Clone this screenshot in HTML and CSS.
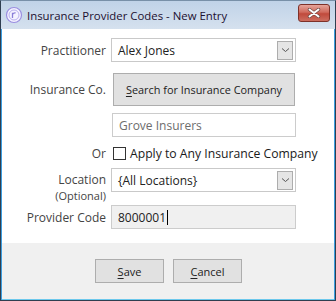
FILE: index.html
```html
<!DOCTYPE html>
<html lang="en">
<head>
  <meta charset="UTF-8">
  <title>Insurance Provider Codes - New Entry</title>
  <link rel="stylesheet" href="styles.css">
</head>
<body>
  <div class="window">
    <div class="titlebar">
      <svg class="app-icon" width="18" height="18" viewBox="0 0 18 18">
        <circle cx="9" cy="9" r="7.5" fill="#f4f2ff" stroke="#9a8ee0" stroke-width="1.2"/>
        <circle cx="9" cy="9" r="5" fill="none" stroke="#b9b0ee" stroke-width="1"/>
        <path d="M7.5 12 V6.8 M7.5 8.4 Q8.4 6.6 10.6 6.9" fill="none" stroke="#8a7ed8" stroke-width="1.3"/>
      </svg>
      <span class="title">Insurance Provider Codes - New Entry</span>
      <div class="close-btn">
        <svg width="14" height="10" viewBox="0 0 14 10">
          <path d="M2.5 1.5 L11.5 8.5 M11.5 1.5 L2.5 8.5" stroke="#6b4a46" stroke-width="3.4" stroke-linecap="round"/>
          <path d="M2.5 1.5 L11.5 8.5 M11.5 1.5 L2.5 8.5" stroke="#ffffff" stroke-width="2" stroke-linecap="round"/>
        </svg>
      </div>
    </div>

    <div class="content">
      <div class="row row-practitioner">
        <label class="label">Practitioner</label>
        <div class="select">
          <span class="value">Alex Jones</span>
          <span class="drop">
            <svg width="9" height="6" viewBox="0 0 9 6"><path d="M1 1.5 L4.5 4.5 L8 1.5" fill="none" stroke="#555" stroke-width="1"/></svg>
          </span>
        </div>
      </div>

      <div class="row row-insurance">
        <label class="label">Insurance Co.</label>
        <button class="btn btn-search"><u>S</u>earch for Insurance Company</button>
      </div>

      <div class="row row-company">
        <span class="label"></span>
        <div class="input readonly">Grove Insurers</div>
      </div>

      <div class="row row-any">
        <label class="label">Or</label>
        <div class="check">
          <span class="box"></span>
          <span class="check-text">Apply to Any Insurance Company</span>
        </div>
      </div>

      <div class="row row-location">
        <label class="label label-stack">
          <span class="main">Location</span>
          <span class="sub">(Optional)</span>
        </label>
        <div class="select">
          <span class="value">{All Locations}</span>
          <span class="drop">
            <svg width="9" height="6" viewBox="0 0 9 6"><path d="M1 1.5 L4.5 4.5 L8 1.5" fill="none" stroke="#555" stroke-width="1"/></svg>
          </span>
        </div>
      </div>

      <div class="row row-code">
        <label class="label">Provider Code</label>
        <div class="input code">8000001<span class="caret"></span></div>
      </div>
    </div>

    <div class="footer">
      <button class="btn btn-foot"><u>S</u>ave</button>
      <button class="btn btn-foot"><u>C</u>ancel</button>
    </div>
  </div>
</body>
</html>
```

FILE: styles.css
```css
body {
  margin: 0;
  font-family: "Open Sans", "Noto Sans", sans-serif;
  font-size: 12px;
  color: #3a3a3a;
}
.window {
  width: 336px;
  height: 301px;
  box-sizing: border-box;
  display: flex;
  flex-direction: column;
  border: 1px solid #2f3f50;
  border-top-color: #7890a8;
  box-shadow: inset 1px 0 0 #3c9ee0, inset -1px 0 0 #3c9ee0, inset 0 -1px 0 #6cc8ec;
  background: #f0f0f0;
}
.titlebar {
  height: 28px;
  display: flex;
  align-items: center;
  padding-left: 4px;
  background: linear-gradient(#c0d3e8, #d5e1ee);
  flex-shrink: 0;
}
.app-icon {
  margin-right: 4px;
}
.title {
  color: #1c1030;
  font-size: 11.4px;
  flex: 1;
}
.close-btn {
  width: 30px;
  height: 16px;
  margin-right: 5px;
  margin-top: -4px;
  border: 1px solid #7e3129;
  border-radius: 3px;
  background: linear-gradient(#e5a59b, #d06a5d 45%, #c04a3c 55%, #cc6d5f);
  display: flex;
  align-items: center;
  justify-content: center;
}
.content {
  background: #ffffff;
  margin: 0 1px;
  padding: 9px 0 14px;
  display: flex;
  flex-direction: column;
}
.row {
  display: grid;
  grid-template-columns: 104px 185px;
  grid-template-rows: 24px;
  column-gap: 5px;
  align-items: center;
}
.label {
  text-align: right;
  color: #444;
}
.select {
  height: 24px;
  box-sizing: border-box;
  border: 1px solid #c9c9c9;
  background: #fff;
  display: flex;
  align-items: center;
  padding-left: 6px;
  color: #222;
}
.select .value {
  flex: 1;
}
.drop {
  width: 16px;
  height: 19px;
  margin-right: 2px;
  box-sizing: border-box;
  border: 1px solid #adadad;
  background: #e5e5e5;
  display: flex;
  align-items: center;
  justify-content: center;
}
.btn {
  font-family: inherit;
  font-size: 11px;
  color: #222;
  background: #e1e1e1;
  border: 1px solid #adadad;
  padding: 0;
}
.btn u {
  text-decoration-thickness: 1px;
  text-underline-offset: 2px;
}
.row-insurance {
  margin-top: 11px;
  grid-template-rows: 33px;
}
.btn-search {
  height: 33px;
  width: 182px;
  margin-left: 2px;
  font-size: 10.9px;
}
.row-company {
  margin-top: 7px;
}
.input {
  height: 24px;
  box-sizing: border-box;
  border: 1px solid #cccccc;
  display: flex;
  align-items: center;
  padding-left: 6px;
}
.readonly {
  color: #6d6d6d;
  margin-left: 1px;
}
.row-any {
  margin-top: 8px;
  grid-template-rows: 16px;
}
.check {
  display: flex;
  align-items: center;
  white-space: nowrap;
  margin-left: 2px;
}
.box {
  flex-shrink: 0;
  width: 13px;
  height: 13px;
  box-sizing: border-box;
  border: 1px solid #333;
  background: #fff;
  margin-right: 4px;
}
.check-text {
  color: #1a1a1a;
  font-size: 12.2px;
}
.row-location {
  margin-top: 7px;
  align-items: start;
}
.label-stack {
  display: flex;
  flex-direction: column;
  margin-top: 5px;
}
.label-stack .main {
  line-height: 14px;
}
.label-stack .sub {
  font-size: 11px;
  line-height: 13px;
  margin-top: 2px;
}
.row-code {
  margin-top: 13px;
}
.code {
  background: #f0f0f0;
  color: #222;
}
.caret {
  width: 1px;
  height: 15px;
  background: #000;
  margin-left: 1px;
}
.footer {
  flex: 1;
  display: flex;
  justify-content: center;
  align-items: flex-start;
  gap: 9px;
  padding-top: 16px;
  padding-left: 1px;
}
.btn-foot {
  width: 69px;
  height: 24px;
}
```
